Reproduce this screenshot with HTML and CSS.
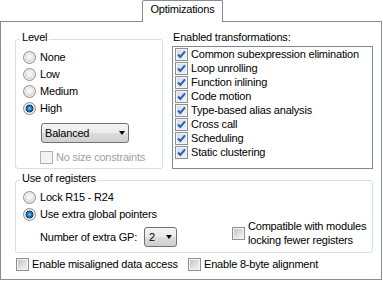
FILE: index.html
```html
<!DOCTYPE html>
<html lang="en">
<head>
    <meta charset="UTF-8">
    <meta name="viewport" content="width=device-width, initial-scale=1.0">
    <title>Optimizations</title>
    <link rel="stylesheet" href="styles.css">
</head>
<body>
    <div class="tabs">
        <div class="tab">Optimizations</div>
    </div>

    <div class="panel">
        <div class="top-row">
            <fieldset class="group level">
                <legend>Level</legend>
                <label class="option"><span class="radio"></span>None</label>
                <label class="option"><span class="radio"></span>Low</label>
                <label class="option"><span class="radio"></span>Medium</label>
                <label class="option"><span class="radio checked"></span>High</label>
                <div class="combo balanced">Balanced<span class="arrow"></span></div>
                <label class="option sub disabled"><span class="check"></span>No size constraints</label>
            </fieldset>

            <div class="transforms">
                <div class="list-label">Enabled transformations:</div>
                <div class="listbox">
                    <div class="item"><span class="check on"><svg viewBox="0 0 11 11"><path d="M2 5.5 L4.3 8 L9 2.3"/></svg></span>Common subexpression elimination</div>
                    <div class="item"><span class="check on"><svg viewBox="0 0 11 11"><path d="M2 5.5 L4.3 8 L9 2.3"/></svg></span>Loop unrolling</div>
                    <div class="item"><span class="check on"><svg viewBox="0 0 11 11"><path d="M2 5.5 L4.3 8 L9 2.3"/></svg></span>Function inlining</div>
                    <div class="item"><span class="check on"><svg viewBox="0 0 11 11"><path d="M2 5.5 L4.3 8 L9 2.3"/></svg></span>Code motion</div>
                    <div class="item"><span class="check on"><svg viewBox="0 0 11 11"><path d="M2 5.5 L4.3 8 L9 2.3"/></svg></span>Type-based alias analysis</div>
                    <div class="item"><span class="check on"><svg viewBox="0 0 11 11"><path d="M2 5.5 L4.3 8 L9 2.3"/></svg></span>Cross call</div>
                    <div class="item"><span class="check on"><svg viewBox="0 0 11 11"><path d="M2 5.5 L4.3 8 L9 2.3"/></svg></span>Scheduling</div>
                    <div class="item"><span class="check on"><svg viewBox="0 0 11 11"><path d="M2 5.5 L4.3 8 L9 2.3"/></svg></span>Static clustering</div>
                </div>
            </div>
        </div>

        <fieldset class="group registers">
            <legend>Use of registers</legend>
            <div class="reg-body">
                <div class="reg-left">
                    <label class="option"><span class="radio"></span>Lock R15 - R24</label>
                    <label class="option"><span class="radio checked"></span>Use extra global pointers</label>
                    <div class="gp-row">
                        <span>Number of extra GP:</span>
                        <div class="combo gp">2<span class="arrow"></span></div>
                    </div>
                </div>
                <label class="compat">
                    <span class="check"></span>
                    <span>Compatible with modules<br>locking fewer registers</span>
                </label>
            </div>
        </fieldset>

        <div class="bottom-row">
            <label class="option misaligned"><span class="check"></span>Enable misaligned data access</label>
            <label class="option"><span class="check"></span>Enable 8-byte alignment</label>
        </div>
    </div>
</body>
</html>
```

FILE: styles.css
```css
body {
    margin: 0;
    background-color: #fff;
    color: #000;
    font-family: "Liberation Sans", Arial, sans-serif;
    font-size: 11px;
    line-height: 13px;
    letter-spacing: -0.2px;
}
.tabs {
    display: flex;
    height: 21px;
    padding-left: 142px;
}
.tab {
    position: relative;
    z-index: 1;
    box-sizing: border-box;
    width: 81px;
    height: 22px;
    padding-top: 2px;
    border: 1px solid #898c95;
    border-bottom: none;
    border-radius: 2px 2px 0 0;
    background-color: #fff;
    text-align: center;
}
.panel {
    box-sizing: border-box;
    width: 382px;
    height: 259px;
    padding: 9px 0 0 14px;
    border: 1px solid #898c95;
}
.top-row {
    display: flex;
    width: 358px;
}
.group {
    box-sizing: border-box;
    min-width: 0;
    margin: 0;
    padding: 0;
    border: 1px solid #d5dfe5;
    border-radius: 3px;
}
.group legend {
    margin-left: 4px;
    padding: 0 2px 4px;
    line-height: 13px;
}
.level {
    width: 148px;
    padding: 1px 0 2px;
}
.option {
    display: flex;
    align-items: center;
    height: 17px;
    padding-left: 7px;
}
.radio {
    box-sizing: border-box;
    width: 13px;
    height: 13px;
    margin-right: 4px;
    border: 1px solid #8e8f8f;
    border-radius: 50%;
    background: radial-gradient(circle at 50% 45%, #fdfdfd 0, #ececec 3px, #d2d2d2 5px, #bdbdbd 6px);
    box-shadow: inset 0 0 0 1px #f2f2f2;
}
.radio.checked {
    background: radial-gradient(circle at 50% 50%, #7fd4fb 0, #2d8fd3 1.5px, #1a5a92 3px, #0f3a60 3.6px, #ececec 4.3px, #d2d2d2 5px, #bdbdbd 6px);
}
.check {
    display: flex;
    align-items: center;
    justify-content: center;
    flex-shrink: 0;
    box-sizing: border-box;
    width: 13px;
    height: 13px;
    margin-right: 3px;
    border: 1px solid #8e8f8f;
    background: linear-gradient(135deg, #b8bcc2 0%, #dfe1e4 55%, #f4f4f4 100%);
    box-shadow: inset 0 0 0 1px #f4f4f4;
}
.check svg {
    width: 11px;
    height: 11px;
}
.check svg path {
    fill: none;
    stroke: #2c5fb8;
    stroke-width: 2;
}
.check.on {
    background: linear-gradient(135deg, #d3dbe8 0%, #eef1f6 100%);
}
.combo {
    display: flex;
    align-items: center;
    justify-content: space-between;
    box-sizing: border-box;
    height: 20px;
    padding-left: 3px;
    border: 1px solid #707070;
    border-radius: 3px;
    background: linear-gradient(#f3f3f3 0%, #ebebeb 50%, #dddddd 51%, #cfcfcf 100%);
}
.arrow {
    width: 0;
    height: 0;
    margin-right: 3px;
    border-left: 3.5px solid transparent;
    border-right: 3.5px solid transparent;
    border-top: 4px solid #000;
}
.balanced {
    width: 88px;
    margin: 6px 0 0 25px;
}
.option.sub {
    height: 16px;
    margin-top: 6px;
    padding-left: 24px;
}
.disabled {
    color: #a0a0a0;
}
.disabled .check {
    border-color: #b1b1b1;
    background: #f4f4f4;
}
.transforms {
    flex: 1;
    margin-left: 9px;
}
.list-label {
    padding-left: 1px;
}
.listbox {
    box-sizing: border-box;
    height: 123px;
    margin-top: 2px;
    border: 1px solid #828790;
}
.item {
    display: flex;
    align-items: center;
    height: 14px;
    padding-left: 2px;
}
.registers {
    width: 358px;
    margin-top: 3px;
    padding-bottom: 5px;
}
.reg-body {
    display: flex;
}
.reg-left {
    width: 216px;
}
.gp-row {
    display: flex;
    align-items: center;
    gap: 7px;
    margin-top: 4px;
    padding-left: 24px;
}
.gp {
    width: 33px;
    padding-left: 4px;
}
.gp .arrow {
    margin-right: 4px;
}
.compat {
    display: flex;
    align-items: center;
    align-self: flex-end;
    line-height: 14px;
}
.bottom-row {
    display: flex;
    margin-top: 4px;
    padding-left: 1px;
}
.bottom-row .option {
    height: 14px;
    padding-left: 0;
}
.misaligned {
    width: 172px;
}
```
